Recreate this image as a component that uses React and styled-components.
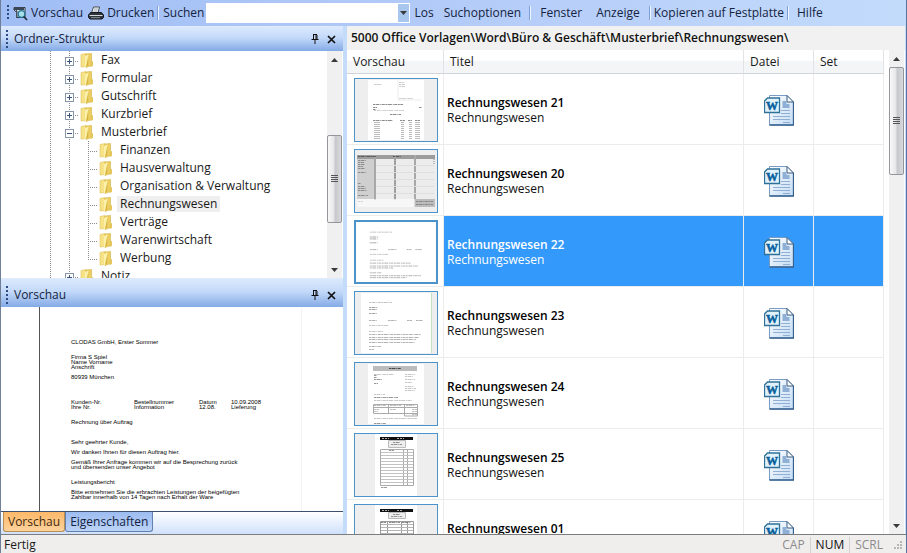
import React from "react";
import styled, { createGlobalStyle, css } from "styled-components";

const GlobalStyle = createGlobalStyle`
  * { box-sizing: border-box; }
  body {
    margin: 0;
    font-family: "Open Sans", "Noto Sans", sans-serif;
    font-size: 12px;
    line-height: 16px;
    color: #1a1a1a;
  }
  button, input { font: inherit; color: inherit; }
`;

const dotsDown = "repeating-linear-gradient(180deg, #8c8c8c 0 1px, transparent 1px 2px)";
const dotsAcross = "repeating-linear-gradient(90deg, #8c8c8c 0 1px, transparent 1px 2px)";

const Window = styled.div`
  height: 100vh;
  display: flex;
  flex-direction: column;
  overflow: hidden;
  background: #c4dbfa;
  border-left: 1px solid #6f7f98;
  border-right: 1px solid #54749f;
`;

const Toolbar = styled.header`
  flex: none;
  height: 26px;
  display: flex;
  align-items: center;
  padding: 0 6px;
  color: #14233f;
  background: linear-gradient(90deg, #a0bdf4 0%, #b3cbf8 50%, #c3dbfb 100%);
`;

const Grip = styled.span`
  flex: none;
  width: 2px;
  height: ${(p) => p.$height || 16}px;
  background: repeating-linear-gradient(180deg, #2f4a80 0 2px, transparent 2px 4px);
`;

const ToolButton = styled.button`
  display: flex;
  align-items: center;
  gap: 3px;
  height: 22px;
  padding: 0 ${(p) => p.$pad || 1}px;
  border: 0;
  background: none;
  white-space: nowrap;
`;

const ToolLabel = styled.label`
  padding: 0 2px;
`;

const Separator = styled.span`
  flex: none;
  width: 2px;
  height: 14px;
  margin: 0 2px;
  background: linear-gradient(90deg, #7f9fd4 50%, #eef5ff 50%);
`;

const SearchBox = styled.div`
  flex: none;
  display: flex;
  width: 204px;
  height: 20px;
  padding: 1px;
  background: #fff;
`;

const SearchInput = styled.input`
  flex: 1;
  min-width: 0;
  border: 0;
  outline: 0;
  padding: 0 3px;
  background: #fff;
`;

const DropButton = styled.button`
  width: 11px;
  padding: 0;
  border: 0;
  display: grid;
  place-items: center;
  background: #a9c6ee;
`;

const Main = styled.div`
  flex: 1;
  min-height: 0;
  display: grid;
  grid-template-columns: 342px minmax(0, 1fr);
  column-gap: 4px;
`;

const Sidebar = styled.aside`
  min-height: 0;
  display: flex;
  flex-direction: column;
`;

const PanelHeader = styled.div`
  flex: none;
  height: ${(p) => p.$height}px;
  display: flex;
  align-items: center;
  padding: ${(p) => p.$height - 25}px 7px 0 5px;
  gap: 6px;
  color: #16243e;
  background: linear-gradient(180deg, #dbe9fd 0%, #c3d9f9 45%, #84aae6 100%);
  border-top: 1px solid #dfebfb;
`;

const PanelTitle = styled.h2`
  flex: 1;
  margin: 0;
  font-size: 12px;
  font-weight: 400;
`;

const IconButton = styled.button`
  width: 10px;
  height: 16px;
  padding: 0;
  border: 0;
  background: none;
  display: grid;
  place-items: center;
`;

const TreePanel = styled.div`
  flex: 227 1 0;
  min-height: 0;
  display: flex;
  padding-right: 1px;
  background: #fff;
`;

const TreeView = styled.ul`
  flex: 1;
  min-width: 0;
  margin: 0;
  padding: 0;
  overflow: hidden;
  list-style: none;
`;

const Branch = styled.ul`
  margin: 0;
  padding: 0;
  list-style: none;
`;

const TreeRow = styled.div`
  display: flex;
  height: 18px;
  padding-left: 40px;
  line-height: 18px;
`;

const Guide = styled.span`
  flex: none;
  width: 19px;
  height: 18px;
  display: flex;
  align-items: center;
  padding-left: 5px;
  background-repeat: no-repeat;
  ${(p) =>
    p.$kind === "line" &&
    css`
      background-image: ${dotsDown};
      background-size: 1px 100%;
      background-position: 9px 0;
    `}
  ${(p) =>
    p.$kind === "node" &&
    css`
      background-image: ${dotsDown}, ${dotsAcross};
      background-size: 1px 100%, 10px 1px;
      background-position: 9px 0, 9px 10px;
    `}
  ${(p) =>
    p.$kind === "end" &&
    css`
      background-image: ${dotsDown}, ${dotsAcross};
      background-size: 1px 10px, 10px 1px;
      background-position: 9px 0, 9px 10px;
    `}
`;

const Expander = styled.button`
  width: 9px;
  height: 9px;
  padding: 0;
  margin-top: 2px;
  border: 1px solid #8795a8;
  display: grid;
  place-items: center;
  background: #fff;
`;

const TreeLabel = styled.span`
  height: 16px;
  margin: 1px 0 1px 4px;
  padding: 0 3px;
  line-height: 16px;
  white-space: nowrap;
  background: ${(p) => (p.$current ? "#efefef" : "none")};
`;

const Scroll = styled.div`
  flex: none;
  width: 15px;
  display: flex;
  flex-direction: column;
  background: #f0f0f1;
`;

const ScrollButton = styled.button`
  flex: none;
  height: 17px;
  padding: 0;
  border: 0;
  background: none;
  display: grid;
  place-items: center;
`;

const Track = styled.div`
  flex: ${(p) => p.$size} 1 0;
`;

const Thumb = styled.div`
  flex: ${(p) => p.$size} 1 0;
  display: grid;
  place-items: center;
  border: 1px solid #94969b;
  border-radius: 2px;
  background: linear-gradient(90deg, #f8f8f8 0%, #e6e6e8 45%, #c6c8cc 55%, #d8d9dc 100%);
`;

const PreviewPanel = styled.div`
  flex: 204 1 0;
  min-height: 0;
  overflow: hidden;
  padding: 0 41px 0 38px;
  background: #fff;
`;

const Paper = styled.article`
  height: 100%;
  padding: 33px 0 0 31px;
  overflow: hidden;
  border-left: 1px solid #555;
  border-right: 1px solid #f4f4f4;
  font-family: "Liberation Sans", sans-serif;
  font-size: 6px;
  line-height: 5px;
  color: #000;
  white-space: nowrap;
`;

const Paragraph = styled.p`
  margin: 0 0 ${(p) => p.$after || 5}px;
`;

const PaperColumns = styled.div`
  display: grid;
  grid-template-columns: 63px 65px 32px 1fr;
  margin-bottom: 10px;
`;

const TabStrip = styled.div`
  flex: none;
  height: 23px;
  display: flex;
  align-items: flex-start;
  padding-left: 2px;
  border-top: 1px solid #3f4f6f;
  background: linear-gradient(180deg, #ffffff, #cfe1fb);
`;

const Tab = styled.button`
  height: 20px;
  padding: 0 4px;
  line-height: 18px;
  border: 1px solid ${(p) => (p.$active ? "#b98e55" : "#6480ae")};
  border-top: 0;
  border-radius: 0 0 3px 3px;
  color: ${(p) => (p.$active ? "#3d2a10" : "#14233f")};
  background: ${(p) =>
    p.$active
      ? "linear-gradient(180deg, #fdb868, #fdd29b)"
      : "linear-gradient(180deg, #9dbcf0, #bcd3f8)"};
`;

const Content = styled.main`
  min-width: 0;
  min-height: 0;
  display: flex;
  flex-direction: column;
  margin-right: 1px;
`;

const PathBar = styled.h1`
  flex: none;
  height: 24px;
  margin: 0;
  padding: 0 4px;
  line-height: 24px;
  font-size: 12px;
  font-weight: 600;
  white-space: nowrap;
  color: #111;
  background: #f1f1f1;
`;

const ListArea = styled.div`
  flex: 1;
  min-height: 0;
  display: flex;
  padding-right: 1px;
  background: #fff;
`;

const TableViewport = styled.div`
  flex: 1;
  min-width: 0;
  overflow: hidden;
  padding-right: 5px;
`;

const Table = styled.table`
  width: 100%;
  table-layout: fixed;
  border-collapse: separate;
  border-spacing: 0;
`;

const HeadCell = styled.th`
  width: ${(p) => (p.$width ? `${p.$width}px` : "auto")};
  height: 24px;
  padding: 0 6px;
  text-align: left;
  font-weight: 400;
  border-right: 1px solid #e2e3e6;
  border-bottom: 1px solid #d0d3d8;
  background: linear-gradient(180deg, #fff 45%, #f4f5f7 50%);
`;

const Cell = styled.td`
  height: 71px;
  padding: 2px ${(p) => p.$pad || 0}px 0;
  vertical-align: middle;
  border-right: 1px solid #ececea;
  border-bottom: 1px solid #ececea;
  line-height: 15px;
  color: ${(p) => (p.$selected ? "#fff" : "#111")};
  background: ${(p) => (p.$selected ? "#3399fb" : "#fff")};
  background-clip: padding-box;
  svg { display: block; }
`;

const ItemTitle = styled.strong`
  display: block;
  font-weight: 600;
  color: ${(p) => (p.$selected ? "#fff" : "#000")};
`;

const Frame = styled.div`
  width: 84px;
  height: 64px;
  margin-left: 7px;
  overflow: hidden;
  border: ${(p) => (p.$selected ? 2 : 1)}px solid #4a93cb;
`;

const Centered = styled.div`
  display: flex;
  justify-content: center;
`;

const StatusBar = styled.footer`
  flex: none;
  height: 19px;
  display: flex;
  align-items: center;
  padding: 2px 3px 0;
  border-top: 1px solid #7d7d7f;
  background: #f0eeed;
`;

const StatusText = styled.span`
  flex: 1;
`;

const StatusKey = styled.span`
  padding: 0 5px;
  color: ${(p) => (p.$on ? "#111" : "#8b8b8b")};
  border-left: 1px solid ${(p) => (p.$first ? "transparent" : "#d4d2d1")};
`;

const PreviewIcon = () => (
  <svg width="15" height="15" viewBox="0 0 15 15">
    <path d="M1 1.500h11v10H3.500V6L1 4z" fill="#e3eaf0" stroke="#2c3440" />
    <path d="M1 1h10v3H1z" fill="#3c4654" />
    <path d="M3.500 4v8M3 6h2M3 8h2M3 10h2" stroke="#46515f" />
    <circle cx="8.500" cy="8" r="3.300" fill="#a6e0ec" stroke="#277792" strokeWidth="1.300" />
    <path d="M10.800 10.500l3.200 3.500" stroke="#26303c" strokeWidth="1.800" />
  </svg>
);

const PrinterIcon = () => (
  <svg width="16" height="14" viewBox="0 0 16 14">
    <path d="M5.500 1h6l-1.500 6H3.500z" fill="#fff" stroke="#444b55" />
    <path d="M6 3h4M5.500 5h4" stroke="#9aa4b2" />
    <path d="M2.500 6.500h11l2 2.500v2.500L14 13H2L.5 11.500V9z" fill="#30353d" stroke="#15181c" />
    <path d="M1.500 9.500h13" stroke="#d4d8dd" />
    <path d="M3 11.700h9" stroke="#8d939c" />
  </svg>
);

const Arrow = ({ up }) => (
  <svg width="7" height="4" viewBox="0 0 7 4" aria-hidden="true">
    <path d={up ? "M0 4L3.500 0L7 4z" : "M0 0h7L3.500 4z"} fill="#3a3a3a" />
  </svg>
);

const PinIcon = () => (
  <svg width="8" height="10" viewBox="0 0 8 10">
    <path d="M2 .5h4M2.500 1v4.500M5 1v4.500M6 1v4.500M0.500 5.500h7M4 6v4" stroke="#111" fill="none" />
  </svg>
);

const CloseIcon = () => (
  <svg width="9" height="9" viewBox="0 0 9 9">
    <path d="M1 1l7 7M8 1L1 8" stroke="#111" strokeWidth="1.700" />
  </svg>
);

const FolderIcon = () => (
  <svg width="15" height="18" viewBox="0 0 15 18" aria-hidden="true">
    <path d="M2 3.500l5-1v13l-5 .5z" fill="#f6e287" stroke="#dfc35d" strokeWidth=".6" />
    <path d="M7 3l5.500-.5v12L7 16.500z" fill="#edcf60" stroke="#d2b044" strokeWidth=".6" />
    <path d="M6 5l3.500-1.500v11L6 16.500z" fill="#fbf0a9" />
    <path d="M9.500 4v10.500L7 16z" fill="#d6b43d" />
    <path d="M14 10v5l-2.500 1v-5z" fill="#e3c75c" />
  </svg>
);

const WordIcon = () => (
  <svg width="30" height="31" viewBox="0 0 30 31" role="img" aria-label="Word-Dokument">
    <defs>
      <linearGradient id="sheet" x1="0" y1="0" x2="1" y2="1">
        <stop offset="0" stopColor="#fff" />
        <stop offset="1" stopColor="#c3dcf5" />
      </linearGradient>
    </defs>
    <path d="M5.500.5h17.500l6.500 6.500v23h-24z" fill="url(#sheet)" stroke="#7b9cc2" />
    <path d="M29.500 7v23h-24" fill="none" stroke="#36618f" strokeWidth="1.300" />
    <path d="M23 .5V7h6.500z" fill="#fff" stroke="#385a80" />
    <path d="M18.500 6h4v3h3v4h-7z" fill="#8fafd4" />
    <path d="M17 15.500h9M17 18.500h9M9 21.500h17M9 24.500h17M19 27.500h7" stroke="#90afd2" />
    <path d="M3.500 3h12v14.500H.5V6z" fill="#e2f2fb" stroke="#2f7199" strokeWidth="1.300" />
    <text x="8" y="15" textAnchor="middle" fontFamily="Liberation Serif, serif" fontWeight="700" fontSize="12" fill="#075f9c" stroke="#075f9c" strokeWidth=".5">W</text>
  </svg>
);

const Rows = ({ list, color = "#999", dash = "2 .5 4 .8 1 .5 3 .6" }) =>
  list.map(([x, y, w], i) => (
    <path key={i} d={`M${x} ${y}.5h${w}`} stroke={color} strokeDasharray={dash} opacity=".75" />
  ));

const LetterLines = ({ dense }) => (
  <>
    <Rows list={[[14, 10, 23]]} color="#b0b0b0" />
    <Rows list={[[14, 15, 9], [14, 17, 8], [14, 21, 8]]} color="#888" />
    <Rows list={[[14, 28, 8], [33, 28, 9], [52, 28, 5], [61, 28, 7]]} color="#999" />
    <Rows list={[[14, 33, 20], [14, 39, 14]]} color="#b4b4b4" />
    <Rows
      list={dense ? [[14, 42, 52], [14, 45, 50], [14, 47, 47], [14, 50, 46], [14, 54, 12], [14, 57, 5]] : [[14, 42, 42], [14, 45, 50], [14, 47, 24], [14, 52, 12], [14, 55, 53], [14, 57, 38]]}
      color="#999"
    />
  </>
);

const drawings = {
  form: (
    <>
      <path d="M13 1h56v60H13z" fill="#fff" />
      <Rows list={[[19, 5, 8], [44, 3, 5], [44, 5, 6], [44, 7, 6], [44, 19, 14], [19, 31, 30]]} color="#bbb" />
      <Rows list={[[18, 25, 30], [18, 28, 4], [18, 30, 3], [64, 28, 3], [35, 35, 11]]} color="#666" />
      <path d="M43 1v20h24" fill="none" stroke="#ececec" />
      <Rows list={[[18, 41, 20], [45, 41, 5], [53, 41, 4], [60, 41, 5]]} color="#666" />
      {[43, 45, 47, 49, 51, 53, 55, 57, 59].map((y) => (
        <path key={y} d={`M19 ${y}.5h6M46 ${y}.5h3M54 ${y}.5h3M60 ${y}.5h5`} stroke="#bcbcbc" />
      ))}
    </>
  ),
  sheet: (
    <>
      <path d="M2 5h78v52H2z" fill="#ececec" />
      <path d="M2 8h17v41H2z" fill="#cfcfcf" />
      <path d="M2 5h78v4H2z" fill="#9c9c9c" />
      <path d="M20 5v45M40 5v45M60 5v52" stroke="#a8a8a8" strokeWidth="2" />
      <path d="M40 9v40M79 9v6" stroke="#888" strokeDasharray="1 1" />
      <Rows list={[[3, 6, 18], [38, 6, 8]]} color="#444" />
      <Rows list={[[3, 10, 8], [3, 12, 6], [3, 14, 7], [3, 16, 5], [3, 18, 7], [3, 22, 8], [3, 33, 3], [3, 36, 7], [3, 38, 8], [3, 40, 9], [3, 45, 10], [3, 51, 5]]} color="#777" />
      <path d="M21 15.500h58M21 22.500h58M21 29.500h58M21 36.500h58M21 43.500h58" stroke="#dfdfdf" />
      <path d="M2 49h58v8H2z" fill="#fff" opacity=".6" />
      <path d="M60 49h20v8H60z" fill="#bcbcbc" />
      <Rows list={[[61, 51, 17], [61, 54, 17]]} color="#777" />
    </>
  ),
  letter: (
    <>
      <path d="M0 0h82v62H0z" fill="#fff" />
      <LetterLines />
    </>
  ),
  letterDense: (
    <>
      <path d="M6 1h71v60H6z" fill="#fff" />
      <LetterLines dense />
      <path d="M76.500 1v60" stroke="#c5e0bd" />
    </>
  ),
  invoice: (
    <>
      <path d="M13 1h56v60H13z" fill="#fff" />
      <path d="M18 3h44v5H18z" fill="#bcbcbc" />
      <Rows list={[[34, 5, 12]]} color="#222" />
      <Rows list={[[19, 11, 20], [50, 11, 10], [50, 13, 8], [50, 16, 10], [50, 19, 7], [50, 23, 9], [50, 25, 11], [50, 27, 10], [19, 31, 11], [19, 37, 38], [19, 55, 43]]} color="#b4b4b4" />
      <Rows list={[[19, 12, 3], [19, 14, 3], [19, 16, 8], [19, 20, 4], [19, 34, 24], [19, 60, 12]]} color="#777" />
      <path d="M18.500 41.500h44v9h-44zM18.500 44.500h44M33.500 41v10M49.500 41v12h13v-3" fill="none" stroke="#aaa" />
      <Rows list={[[19, 42, 12], [35, 42, 11], [51, 42, 9], [19, 46, 5], [35, 46, 6], [19, 48, 4], [57, 46, 5], [57, 48, 5], [57, 51, 5]]} color="#aaa" />
    </>
  ),
  receipt: (
    <>
      <path d="M20 0h42v62H20z" fill="#fff" />
      <path d="M25 3h33v3H25z" fill="#111" />
      <path d="M27 4.500h7M42 4.500h7" stroke="#aaa" strokeDasharray="2 1" />
      <path d="M33.500 6.500h17v7h-17z" fill="#ededed" stroke="#bbb" />
      <Rows list={[[38, 8, 7], [36, 10, 11]]} color="#777" />
      <path d="M25.500 15.500h33v36h-33zM48.500 15v37M52.500 15v37" fill="none" stroke="#aaa" />
      {[18, 21, 24, 27, 30, 33, 36, 39, 42, 45, 48].map((y) => (
        <path key={y} d={`M26 ${y}.5h32`} stroke="#c2c2c2" />
      ))}
      <Rows list={[[26, 53, 6], [34, 16, 5]]} color="#777" />
    </>
  ),
  receiptWide: (
    <>
      <path d="M20 0h42v62H20z" fill="#fff" />
      <path d="M25 4h33v3H25z" fill="#111" />
      <path d="M27 5.500h7M42 5.500h6" stroke="#aaa" strokeDasharray="2 1" />
      <path d="M33.500 7.500h17v6h-17z" fill="#ededed" stroke="#bbb" />
      <Rows list={[[38, 9, 7], [36, 11, 11]]} color="#777" />
      <path d="M25.500 16.500h33v40h-33zM32.500 16v40M46.500 16v40M52.500 16v40" fill="none" stroke="#999" />
      {[19, 22, 25, 28, 31, 34].map((y) => (
        <path key={y} d={`M26 ${y}.5h32`} stroke="#b5b5b5" />
      ))}
      <Rows list={[[26, 17, 5], [34, 17, 11], [47, 17, 9]]} color="#666" />
    </>
  ),
};

const Thumbnail = ({ kind, selected }) => (
  <Frame $selected={selected}>
    <svg width="100%" height="100%" viewBox="0 0 82 62" aria-hidden="true">
      <path d="M0 0h82v62H0z" fill="#eee" />
      {drawings[kind]}
    </svg>
  </Frame>
);

const ScrollBar = ({ before, size, after }) => (
  <Scroll>
    <ScrollButton aria-label="Nach oben"><Arrow up /></ScrollButton>
    {before > 0 && <Track $size={before} />}
    <Thumb $size={size}>
      <svg width="7" height="8" viewBox="0 0 7 8" aria-hidden="true">
        <path d="M0 .5h7M0 2.500h7M0 4.500h7M0 6.500h7" stroke="#555" />
      </svg>
    </Thumb>
    <Track $size={after} />
    <ScrollButton aria-label="Nach unten"><Arrow /></ScrollButton>
  </Scroll>
);

const folders = [
  { name: "Fax" },
  { name: "Formular" },
  { name: "Gutschrift" },
  { name: "Kurzbrief" },
  {
    name: "Musterbrief",
    children: [
      "Finanzen",
      "Hausverwaltung",
      "Organisation & Verwaltung",
      "Rechnungswesen",
      "Verträge",
      "Warenwirtschaft",
      "Werbung",
    ],
  },
  { name: "Notiz" },
];

const templates = [
  { number: "21", kind: "form" },
  { number: "20", kind: "sheet" },
  { number: "22", kind: "letter", selected: true },
  { number: "23", kind: "letterDense" },
  { number: "24", kind: "invoice" },
  { number: "25", kind: "receipt" },
  { number: "01", kind: "receiptWide" },
];

const Folder = ({ folder }) => (
  <li>
    <TreeRow>
      <Guide $kind="line" />
      <Guide $kind="node">
        <Expander aria-label={folder.name} aria-expanded={Boolean(folder.children)}>
          <svg width="7" height="7" viewBox="0 0 7 7">
            <path d={folder.children ? "M1 3.500h5" : "M1 3.500h5M3.500 1v5"} stroke="#3b5578" />
          </svg>
        </Expander>
      </Guide>
      <FolderIcon />
      <TreeLabel>{folder.name}</TreeLabel>
    </TreeRow>
    {folder.children && (
      <Branch>
        {folder.children.map((name, i) => (
          <li key={name}>
            <TreeRow>
              <Guide $kind="line" />
              <Guide $kind="line" />
              <Guide $kind={i === folder.children.length - 1 ? "end" : "node"} />
              <FolderIcon />
              <TreeLabel $current={name === "Rechnungswesen"}>{name}</TreeLabel>
            </TreeRow>
          </li>
        ))}
      </Branch>
    )}
  </li>
);

const PanelTop = ({ title, height }) => (
  <PanelHeader $height={height}>
    <Grip $height={18} />
    <PanelTitle>{title}</PanelTitle>
    <IconButton aria-label="Anheften"><PinIcon /></IconButton>
    <IconButton aria-label="Schließen"><CloseIcon /></IconButton>
  </PanelHeader>
);

export default function App() {
  return (
    <Window>
      <GlobalStyle />
      <Toolbar>
        <Grip />
        <ToolButton $pad={4}><PreviewIcon />Vorschau</ToolButton>
        <ToolButton><PrinterIcon />Drucken</ToolButton>
        <Separator />
        <ToolLabel htmlFor="search">Suchen</ToolLabel>
        <SearchBox>
          <SearchInput id="search" />
          <DropButton aria-label="Suchverlauf"><Arrow /></DropButton>
        </SearchBox>
        <ToolButton $pad={4}>Los</ToolButton>
        <ToolButton $pad={6}>Suchoptionen</ToolButton>
        <Separator />
        <ToolButton $pad={7}>Fenster</ToolButton>
        <ToolButton $pad={7}>Anzeige</ToolButton>
        <Separator />
        <ToolButton>Kopieren auf Festplatte</ToolButton>
        <Separator />
        <ToolButton $pad={6}>Hilfe</ToolButton>
      </Toolbar>
      <Main>
        <Sidebar>
          <PanelTop title="Ordner-Struktur" height={25} />
          <TreePanel>
            <TreeView>
              {folders.map((folder) => (
                <Folder key={folder.name} folder={folder} />
              ))}
            </TreeView>
            <ScrollBar before={68} size={87} after={38} />
          </TreePanel>
          <PanelTop title="Vorschau" height={29} />
          <PreviewPanel>
            <Paper>
              <Paragraph $after={10}>CLODAS GmbH, Erster Sommer</Paragraph>
              <Paragraph>Firma S Spiel<br />Name Vorname<br />Anschrift</Paragraph>
              <Paragraph $after={20}>80939 München</Paragraph>
              <PaperColumns>
                <span>Kunden-Nr.<br />Ihre Nr.</span>
                <span>Bestellnummer<br />Information</span>
                <span>Datum<br />12.08.</span>
                <span>10.09.2008<br />Lieferung</span>
              </PaperColumns>
              <Paragraph $after={15}>Rechnung über Auftrag</Paragraph>
              <Paragraph>Sehr geehrter Kunde,</Paragraph>
              <Paragraph>Wir danken Ihnen für diesen Auftrag hier.</Paragraph>
              <Paragraph $after={10}>
                Gemäß Ihrer Anfrage kommen wir auf die Besprechung zurück<br />
                und übersenden unser Angebot
              </Paragraph>
              <Paragraph>Leistungsbericht</Paragraph>
              <Paragraph>
                Bitte entnehmen Sie die erbrachten Leistungen der beigefügten<br />
                Zahlbar innerhalb von 14 Tagen nach Erhalt der Ware
              </Paragraph>
            </Paper>
          </PreviewPanel>
          <TabStrip role="tablist">
            <Tab role="tab" aria-selected="true" $active>Vorschau</Tab>
            <Tab role="tab" aria-selected="false">Eigenschaften</Tab>
          </TabStrip>
        </Sidebar>
        <Content>
          <PathBar>5000 Office Vorlagen\Word\Büro &amp; Geschäft\Musterbrief\Rechnungswesen\</PathBar>
          <ListArea>
            <TableViewport>
              <Table>
                <thead>
                  <tr>
                    <HeadCell $width={97}>Vorschau</HeadCell>
                    <HeadCell>Titel</HeadCell>
                    <HeadCell $width={70}>Datei</HeadCell>
                    <HeadCell $width={70}>Set</HeadCell>
                  </tr>
                </thead>
                <tbody>
                  {templates.map(({ number, kind, selected }) => (
                    <tr key={number}>
                      <Cell><Thumbnail kind={kind} selected={selected} /></Cell>
                      <Cell $pad={3} $selected={selected}>
                        <ItemTitle $selected={selected}>Rechnungswesen {number}</ItemTitle>
                        Rechnungswesen
                      </Cell>
                      <Cell $selected={selected}><Centered><WordIcon /></Centered></Cell>
                      <Cell $selected={selected} />
                    </tr>
                  ))}
                </tbody>
              </Table>
            </TableViewport>
            <ScrollBar before={0} size={106} after={343} />
          </ListArea>
        </Content>
      </Main>
      <StatusBar>
        <StatusText>Fertig</StatusText>
        <StatusKey $first>CAP</StatusKey>
        <StatusKey $on>NUM</StatusKey>
        <StatusKey>SCRL</StatusKey>
        <svg width="15" height="13" viewBox="3 0 15 13" aria-hidden="true">
          <path d="M15 3h2M12 6h2M15 6h2M9 9h2M12 9h2M15 9h2" stroke="#b9b7b6" strokeWidth="2" />
        </svg>
      </StatusBar>
    </Window>
  );
}
